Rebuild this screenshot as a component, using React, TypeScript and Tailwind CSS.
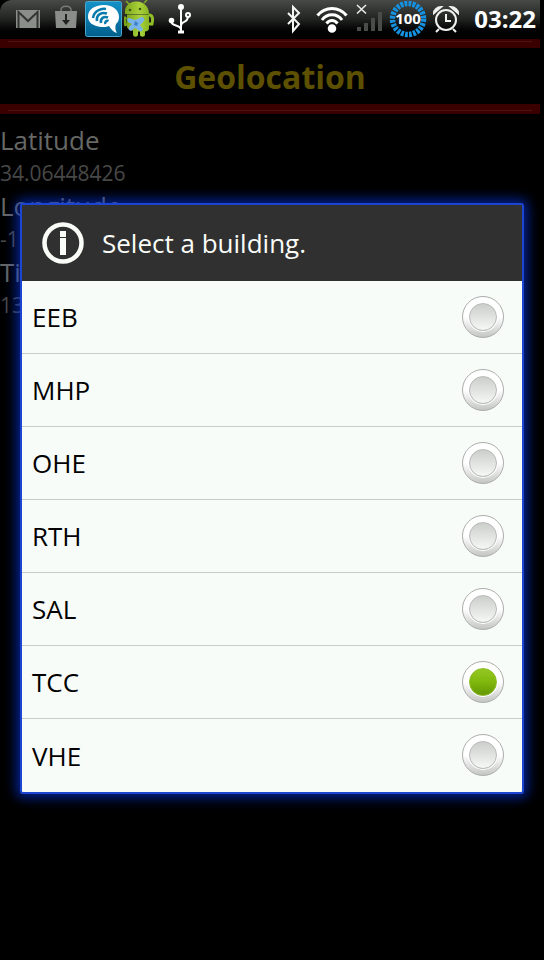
import { useState } from "react";

const buildings = ["EEB", "MHP", "OHE", "RTH", "SAL", "TCC", "VHE"];

const readings = [
  { label: "Latitude", value: "34.06448426" },
  { label: "Longitude", value: "-118.44502" },
  { label: "Time", value: "1330942953" },
];

function GmailIcon() {
  return (
    <svg className="h-5 w-6" viewBox="0 0 24 20">
      <path d="M0 1h24v18H0z" fill="#8b8d8b" />
      <path d="M2.500 19V3l9.500 9 9.500-9v16" fill="none" stroke="#333533" strokeWidth="2" />
    </svg>
  );
}

function MarketIcon() {
  return (
    <svg className="h-6 w-6" viewBox="0 0 24 24">
      <path d="M7 7V5c0-5 10-5 10 0v2" fill="none" stroke="#777977" strokeWidth="1.5" />
      <path d="M1 6h22l-1 17H2z" fill="#8b8d8b" />
      <path d="M12 9v7" stroke="#222" strokeWidth="2" />
      <path d="m8 15 4 5 4-5z" fill="#222" />
    </svg>
  );
}

function ChatIcon() {
  return (
    <svg className="h-9 w-10" viewBox="0 0 40 36">
      <defs>
        <linearGradient id="chat" x1="0" y1="0" x2="0" y2="1">
          <stop offset="0" stopColor="#1492c8" />
          <stop offset="1" stopColor="#005f8c" />
        </linearGradient>
      </defs>
      <rect x="1.500" y="0.5" width="36" height="35" rx="2" fill="url(#chat)" stroke="#4ba9cf" />
      <path d="M20 4C10 4 4 9 4 15.500c0 6 5 9.500 13 10.500 4 0 6 0 8-1 2 3 4 6 8 7-2-3-2-6-1-9 2-2 3-4 3-7 0-7-6-12-15-12z" fill="#fff" />
      <path d="M9 17C10 10 17 7 22 8M13 20C12 13 18 11 23 12.500M17 22c-1-5 3-7 7-5.500M21.500 23c-1-2 1-4 3-3" fill="none" stroke="#087bad" strokeWidth="2.600" />
    </svg>
  );
}

function AndroidIcon() {
  return (
    <svg className="h-10 w-8" viewBox="0 0 32 40">
      <defs>
        <linearGradient id="droid" x1="0" y1="0" x2="1" y2="0">
          <stop offset="0" stopColor="#7da51c" />
          <stop offset="0.6" stopColor="#a9d23a" />
          <stop offset="1" stopColor="#8ab523" />
        </linearGradient>
      </defs>
      <path d="M5 5 2 2M20 4l3-3" stroke="#82ae21" strokeWidth="1.5" />
      <path d="M1 15C0 7 5 3 12 2.500S25 7 25 15z" fill="url(#droid)" />
      <circle cx="6" cy="11" r="1.300" fill="#3c5510" />
      <circle cx="16" cy="10" r="1.300" fill="#3c5510" />
      <path d="M3 15.500h22v14c0 2-2 3-4 3v3c0 3-5 3-5 0v-3h-2v3c0 3-5 3-5 0v-4c-3 0-6-2-6-4z" fill="url(#droid)" />
      <path d="M26 16c3 1 3 5 2 9h-3" fill="none" stroke="#91bd27" strokeWidth="3" strokeLinecap="round" />
      <path d="M2 18c-2 2-1 6 0 9" fill="none" stroke="#79a51c" strokeWidth="3" />
      <path d="m5 19 6 2 7-3c3 1 3 3 1 5l-3 3 3 4c-1 3-3 3-5 1l-3-2-4 3c-3-1-3-3-1-5l2-2-4-2c-1-2-1-4 1-4z" fill="#78b4ea" />
      <path d="m11 22 3 2-1 3-3-1z" fill="#3f7fcb" />
    </svg>
  );
}

function UsbIcon() {
  return (
    <svg className="h-8 w-6" viewBox="0 0 24 32" fill="none" stroke="#fff" strokeWidth="2">
      <path d="M13 5v25M3 18c0 6 10 3 10 9M20 13c0 8-7 4-7 10" />
      <circle cx="13" cy="4" r="2" fill="#fff" />
      <circle cx="3.500" cy="17.500" r="1.800" fill="#fff" />
      <circle cx="20" cy="12" r="2" />
      <path d="M10 29h6" strokeWidth="3" />
    </svg>
  );
}

function BluetoothIcon() {
  return (
    <svg className="h-8 w-4" viewBox="0 0 16 32" fill="none" stroke="#f4f6f4" strokeWidth="2">
      <path d="m2 10 11 11-6 7V4l6 6L2 21" />
    </svg>
  );
}

function WifiIcon() {
  return (
    <svg className="h-7 w-8" viewBox="0 0 32 28" fill="none" stroke="#fff" strokeWidth="3">
      <path d="M1.500 10.500C9 1 23 1 30.500 10.500M6 15c5-7 15-7 20 0M10.500 18.500c3-4 8-4 11 0" />
      <circle cx="16" cy="23.500" r="2.800" fill="#fff" />
    </svg>
  );
}

function SignalIcon() {
  return (
    <svg className="h-8 w-7" viewBox="0 0 28 32">
      <path d="m1 2 9 8.500M10 2l-9 8.500" stroke="#e8e8e8" strokeWidth="1.600" />
      <path d="M1 24h4v4H1zM8 20h4v8H8zM15 15h4v13h-4zM22 9h4v19h-4z" fill="#4a4c4a" />
    </svg>
  );
}

function BatteryIcon() {
  return (
    <svg className="h-9 w-9 overflow-visible" viewBox="0 0 36 36">
      <circle cx="18" cy="18" r="15.500" fill="none" stroke="#1592e2" strokeWidth="5.500" strokeDasharray="2.870 1.190" />
      <text x="18" y="23" textAnchor="middle" fill="#fff" className="font-['Noto_Sans'] text-[15px] font-bold">100</text>
    </svg>
  );
}

function AlarmIcon() {
  return (
    <svg className="h-7 w-7" viewBox="0 0 28 28" fill="none" stroke="#f0f2f0" strokeWidth="2">
      <circle cx="14" cy="15" r="10" />
      <path d="M14 9v7h5M7 24l-3 3M21 24l3 3M2 8c0-3 3-6 7-6L2 8zM26 8c0-3-3-6-7-6l7 6z" />
    </svg>
  );
}

function InfoIcon() {
  return (
    <svg className="h-[42px] w-[42px]" viewBox="0 0 42 42">
      <circle cx="21" cy="21" r="18.500" fill="none" stroke="#fafcf8" strokeWidth="4.500" />
      <path d="M18 9h6v6h-6zM18 16h6v17h-6z" fill="#fafcf8" />
    </svg>
  );
}

function Rule({ low = false }: { low?: boolean }) {
  return (
    <div className={low ? "h-[10px] bg-[#3a0000] px-2 pt-[6px]" : "h-[9px] bg-[#3a0000] px-2 pt-[2px]"}>
      <div className="h-px bg-[#521010]" />
    </div>
  );
}

export default function App() {
  const [selected, setSelected] = useState("TCC");

  return (
    <div className="flex min-h-screen flex-col bg-black font-['Open_Sans','Noto_Sans',sans-serif]">
      <header className="mr-1 flex h-[38px] items-center justify-between rounded-tl-xl bg-linear-to-b from-[#484a48] via-[#222422] to-black pr-1 pl-4 text-white">
        <div className="flex items-center">
          <GmailIcon />
          <div className="ml-[14px] flex items-center pb-1">
            <MarketIcon />
          </div>
          <div className="ml-[6px] flex items-center">
            <ChatIcon />
            <AndroidIcon />
          </div>
          <div className="ml-3 flex"><UsbIcon /></div>
        </div>
        <div className="flex items-center">
          <BluetoothIcon />
          <div className="mr-2 ml-[14px] flex"><WifiIcon /></div>
          <SignalIcon />
          <div className="mx-[6px] flex"><BatteryIcon /></div>
          <AlarmIcon />
          <time className="ml-[14px] text-2xl font-bold">03:22</time>
        </div>
      </header>

      <div className="relative grow">
        <main className="pt-px pr-1">
          <Rule />
          <h1 className="pt-[5px] pb-[3px] text-center text-[32px] leading-[48px] font-bold text-[#5d5000]">Geolocation</h1>
          <Rule low />
          <dl className="pt-2">
            {readings.map((reading) => (
              <div key={reading.label}>
                <dt className="text-[26px] leading-[36px] text-[#666866]">{reading.label}</dt>
                <dd className="text-[21px] leading-[30px] text-[#484848]">{reading.value}</dd>
              </div>
            ))}
          </dl>
        </main>

        <div className="absolute inset-0 flex items-center px-5 pb-[2px]">
          <section
            role="dialog"
            aria-labelledby="dialog-title"
            className="w-full rounded-[3px] border-2 border-[#1c46d2] bg-[#f8fcf8] shadow-[0_0_12px_4px_rgba(0,50,220,0.65)]"
          >
            <div className="flex h-[76px] items-center gap-[18px] bg-[#303030] px-5">
              <InfoIcon />
              <h2 id="dialog-title" className="pt-[2px] text-[26px] text-[#fafcf8]">Select a building.</h2>
            </div>
            <div className="divide-y divide-[#c8ccc8]">
              {buildings.map((name) => (
                <label key={name} className="flex h-[73px] items-center justify-between pr-[18px] pl-[10px] text-[26px] text-black">
                  <span className="pt-[2px]">{name}</span>
                  <input
                    type="radio"
                    name="building"
                    value={name}
                    checked={selected === name}
                    onChange={() => setSelected(name)}
                    className="grid h-[42px] w-[42px] appearance-none place-items-center rounded-full border border-[#acaeac] bg-linear-to-b from-white from-50% to-[#c4c6c4] before:h-7 before:w-7 before:rounded-full before:border before:border-[#b8bab8] before:bg-linear-to-b before:from-[#cccecc] before:to-[#f6f8f6] before:shadow-[0_0_0_1px_#fff] checked:before:border-[#8cbc28] checked:before:from-[#94c820] checked:before:via-[#80b80c] checked:before:to-[#649804]"
                  />
                </label>
              ))}
            </div>
          </section>
        </div>
      </div>
    </div>
  );
}
